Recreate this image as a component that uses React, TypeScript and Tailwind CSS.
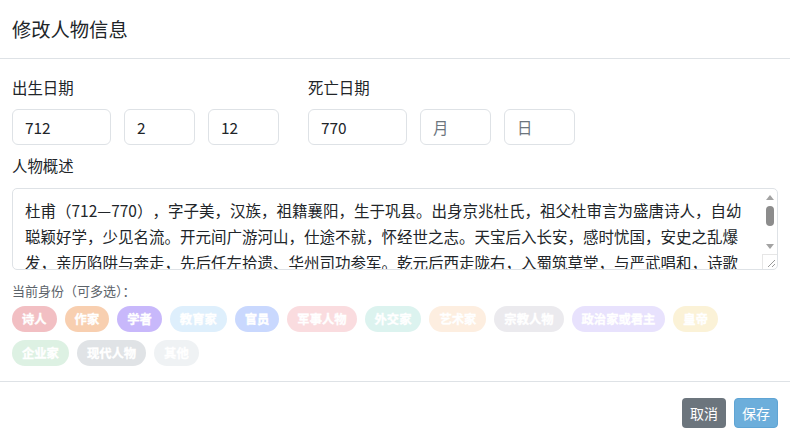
import { useState } from "react";

const TAGS: { label: string; bg: string }[] = [
  { label: "诗人", bg: "bg-[#f2bfc3]" },
  { label: "作家", bg: "bg-[#f8cfb0]" },
  { label: "学者", bg: "bg-[#c8b8fb]" },
  { label: "教育家", bg: "bg-[#deeffc]" },
  { label: "官员", bg: "bg-[#c9d8fe]" },
  { label: "军事人物", bg: "bg-[#fadcdf]" },
  { label: "外交家", bg: "bg-[#dcf3ef]" },
  { label: "艺术家", bg: "bg-[#fdeee0]" },
  { label: "宗教人物", bg: "bg-[#ebeaee]" },
  { label: "政治家或君主", bg: "bg-[#e8e2fd]" },
  { label: "皇帝", bg: "bg-[#fbf2d7]" },
  { label: "企业家", bg: "bg-[#ddf1e3]" },
  { label: "现代人物", bg: "bg-[#e0e3e6]" },
  { label: "其他", bg: "bg-[#eff2f4]" },
];

const BIO =
  "杜甫（712—770），字子美，汉族，祖籍襄阳，生于巩县。出身京兆杜氏，祖父杜审言为盛唐诗人，自幼聪颖好学，少见名流。开元间广游河山，仕途不就，怀经世之志。天宝后入长安，感时忧国，安史之乱爆发，亲历陷阱与奔走，先后任左拾遗、华州司功参军。乾元后西走陇右，入蜀筑草堂，与严武唱和，诗歌风格沉郁顿挫，世称“诗圣”，其诗被称为“诗史”。晚年漂泊湖湘，病逝于湘江舟中，存诗一千四百余首。";

function DateInput({ value, placeholder, wide }: { value?: string; placeholder?: string; wide?: boolean }) {
  return (
    <input
      defaultValue={value}
      placeholder={placeholder}
      className={`${wide ? "w-[99px]" : "w-[71px]"} h-9 rounded-md border border-[#dee2e6] px-3 text-[15.4px] text-[#212529] placeholder:text-[#6c757d] outline-none`}
    />
  );
}

// classic scrollbar look, drawn over the textarea's right edge
function FakeScrollbar() {
  return (
    <div className="absolute right-[1px] top-[1px] bottom-[1px] w-[15px] flex flex-col pointer-events-none">
      <div className="h-[17px] flex items-center justify-center">
        <div className="w-0 h-0 border-x-[4px] border-x-transparent border-b-[5px] border-b-[#a3a3a3]" />
      </div>
      <div className="h-[20px] flex justify-center">
        <div className="w-[8px] h-[20px] rounded-full bg-[#8c8c8c]" />
      </div>
      <div className="flex-1" />
      <div className="h-[16px] flex items-center justify-center">
        <div className="w-0 h-0 border-x-[4px] border-x-transparent border-t-[5px] border-t-[#a3a3a3]" />
      </div>
      <div className="h-[15px] border-l border-t border-[#e6e6e6] relative overflow-hidden">
        <svg width="14" height="14" viewBox="0 0 14 14" className="absolute right-0 bottom-0">
          <path d="M12 5 L5 12 M12 9 L9 12" stroke="#9a9a9a" strokeWidth="1" />
        </svg>
      </div>
    </div>
  );
}

export default function App() {
  const [bio, setBio] = useState(BIO);

  return (
    <div className="w-[790px] h-[438px] bg-white overflow-hidden font-['Noto_Sans_CJK_SC','Noto_Sans',sans-serif] text-[#212529]">
      <div className="h-[59px] flex items-center px-3 border-b border-[#dee2e6]">
        <h5 className="text-[19.3px] leading-[30px] font-normal">修改人物信息</h5>
      </div>

      <div className="pt-4 pl-3 pr-3 pb-[15px] border-b border-[#dee2e6]">
        <div className="flex gap-[29px]">
          <div>
            <div className="text-[15.4px] leading-6 mb-[10px]">出生日期</div>
            <div className="flex gap-[13px]">
              <DateInput value="712" wide />
              <DateInput value="2" />
              <DateInput value="12" />
            </div>
          </div>
          <div>
            <div className="text-[15.4px] leading-6 mb-[10px]">死亡日期</div>
            <div className="flex gap-[13px]">
              <DateInput value="770" wide />
              <DateInput placeholder="月" />
              <DateInput placeholder="日" />
            </div>
          </div>
        </div>

        <div className="text-[15.4px] leading-6 mt-2 mb-[11px]">人物概述</div>
        <div className="relative">
          <textarea
            value={bio}
            onChange={(e) => setBio(e.target.value)}
            className="block w-full h-[82px] resize-none rounded-[5px] border border-[#dee2e6] pl-3 pr-[30px] pt-2 text-[15.5px] leading-[26px] text-[#212529] outline-none overflow-y-scroll [scrollbar-width:none] [text-spacing-trim:space-all]"
          />
          <FakeScrollbar />
        </div>

        <div className="mt-3 text-[13px] leading-[18px] text-[#5c636a]">当前身份（可多选）：</div>
        <div className="mt-[6px] flex flex-wrap gap-2">
          {TAGS.map((t) => (
            <span
              key={t.label}
              className={`${t.bg} h-[26px] px-[10px] rounded-full flex items-center text-[12.3px] font-bold text-white [-webkit-text-stroke:0.35px_white]`}
            >
              {t.label}
            </span>
          ))}
        </div>
      </div>

      <div className="flex justify-end gap-2 pt-4 pr-3">
        <button className="h-[30px] px-2 rounded bg-[#6c757d] text-white text-[14px]">取消</button>
        <button className="h-[30px] px-[7px] rounded bg-[#6caedb] border border-[#5fa4d4] text-white text-[14px]">保存</button>
      </div>
    </div>
  );
}
